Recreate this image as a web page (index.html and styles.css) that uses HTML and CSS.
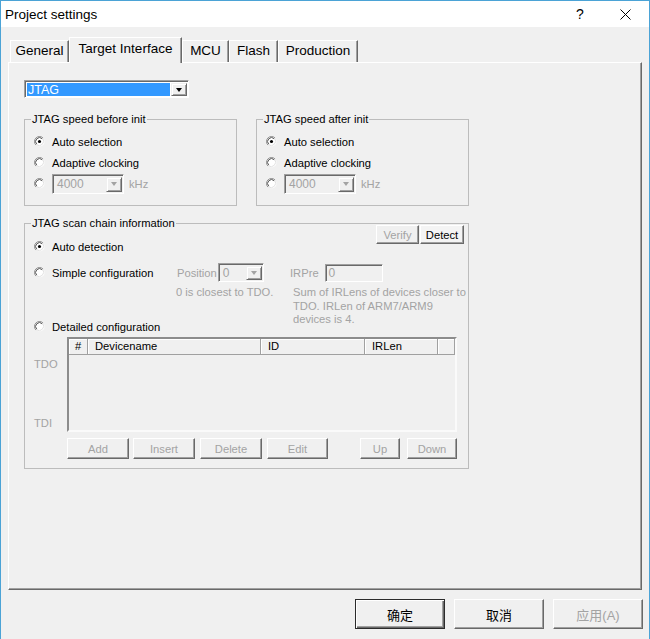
FILE: index.html
```html
<!DOCTYPE html>
<html>
<head>
<meta charset="utf-8">
<title>Project settings</title>
<link rel="stylesheet" href="styles.css">
</head>
<body>
<div class="window">
  <div class="titlebar">
    <span class="title">Project settings</span>
    <span class="help">?</span>
    <svg class="close" viewBox="0 0 11 11"><path d="M0.5 0.5L10.5 10.5M10.5 0.5L0.5 10.5" stroke="#000" stroke-width="1" fill="none"/></svg>
  </div>
  <div class="client">
    <div class="tabs">
      <div class="tab t-general">General</div>
      <div class="tab active t-target">Target Interface</div>
      <div class="tab t-mcu">MCU</div>
      <div class="tab t-flash">Flash</div>
      <div class="tab t-prod">Production</div>
    </div>
    <div class="panel">
      <div class="combo main-combo">
        <span class="combo-value">JTAG</span>
        <span class="combo-btn"><i class="tri"></i></span>
      </div>

      <div class="speed-row">
        <fieldset class="group speed">
          <legend>JTAG speed before init</legend>
          <div class="group-body">
            <div class="opt"><svg class="radio" viewBox="0 0 12 12"><circle cx="6" cy="6" r="5.5" fill="#fff"/><path d="M2.1 9.9A5.5 5.5 0 0 1 9.9 2.1" fill="none" stroke="#8a8a8a"/><path d="M3 9A4.2 4.2 0 0 1 9 3" fill="none" stroke="#404040"/><path d="M9.5 2.5A5 5 0 0 1 2.5 9.5" fill="none" stroke="#dedede"/><circle cx="6" cy="6" r="1.7" fill="#000"/></svg><span>Auto selection</span></div>
            <div class="opt"><svg class="radio" viewBox="0 0 12 12"><circle cx="6" cy="6" r="5.5" fill="#fff"/><path d="M2.1 9.9A5.5 5.5 0 0 1 9.9 2.1" fill="none" stroke="#8a8a8a"/><path d="M3 9A4.2 4.2 0 0 1 9 3" fill="none" stroke="#404040"/><path d="M9.5 2.5A5 5 0 0 1 2.5 9.5" fill="none" stroke="#dedede"/></svg><span>Adaptive clocking</span></div>
            <div class="opt"><svg class="radio" viewBox="0 0 12 12"><circle cx="6" cy="6" r="5.5" fill="#fff"/><path d="M2.1 9.9A5.5 5.5 0 0 1 9.9 2.1" fill="none" stroke="#8a8a8a"/><path d="M3 9A4.2 4.2 0 0 1 9 3" fill="none" stroke="#404040"/><path d="M9.5 2.5A5 5 0 0 1 2.5 9.5" fill="none" stroke="#dedede"/></svg>
              <div class="combo dis small-combo"><span class="combo-value">4000</span><span class="combo-btn"><i class="tri"></i></span></div>
              <span class="unit">kHz</span>
            </div>
          </div>
        </fieldset>
        <fieldset class="group speed">
          <legend>JTAG speed after init</legend>
          <div class="group-body">
            <div class="opt"><svg class="radio" viewBox="0 0 12 12"><circle cx="6" cy="6" r="5.5" fill="#fff"/><path d="M2.1 9.9A5.5 5.5 0 0 1 9.9 2.1" fill="none" stroke="#8a8a8a"/><path d="M3 9A4.2 4.2 0 0 1 9 3" fill="none" stroke="#404040"/><path d="M9.5 2.5A5 5 0 0 1 2.5 9.5" fill="none" stroke="#dedede"/><circle cx="6" cy="6" r="1.7" fill="#000"/></svg><span>Auto selection</span></div>
            <div class="opt"><svg class="radio" viewBox="0 0 12 12"><circle cx="6" cy="6" r="5.5" fill="#fff"/><path d="M2.1 9.9A5.5 5.5 0 0 1 9.9 2.1" fill="none" stroke="#8a8a8a"/><path d="M3 9A4.2 4.2 0 0 1 9 3" fill="none" stroke="#404040"/><path d="M9.5 2.5A5 5 0 0 1 2.5 9.5" fill="none" stroke="#dedede"/></svg><span>Adaptive clocking</span></div>
            <div class="opt"><svg class="radio" viewBox="0 0 12 12"><circle cx="6" cy="6" r="5.5" fill="#fff"/><path d="M2.1 9.9A5.5 5.5 0 0 1 9.9 2.1" fill="none" stroke="#8a8a8a"/><path d="M3 9A4.2 4.2 0 0 1 9 3" fill="none" stroke="#404040"/><path d="M9.5 2.5A5 5 0 0 1 2.5 9.5" fill="none" stroke="#dedede"/></svg>
              <div class="combo dis small-combo"><span class="combo-value">4000</span><span class="combo-btn"><i class="tri"></i></span></div>
              <span class="unit">kHz</span>
            </div>
          </div>
        </fieldset>
      </div>

      <fieldset class="group scan">
        <legend>JTAG scan chain information</legend>
        <div class="scan-body">
          <div class="row1">
            <div class="opt"><svg class="radio" viewBox="0 0 12 12"><circle cx="6" cy="6" r="5.5" fill="#fff"/><path d="M2.1 9.9A5.5 5.5 0 0 1 9.9 2.1" fill="none" stroke="#8a8a8a"/><path d="M3 9A4.2 4.2 0 0 1 9 3" fill="none" stroke="#404040"/><path d="M9.5 2.5A5 5 0 0 1 2.5 9.5" fill="none" stroke="#dedede"/><circle cx="6" cy="6" r="1.7" fill="#000"/></svg><span>Auto detection</span></div>
            <div class="btn-pair">
              <div class="btn dis btn-verify">Verify</div>
              <div class="btn btn-detect">Detect</div>
            </div>
          </div>

          <div class="simple">
            <div class="opt"><svg class="radio" viewBox="0 0 12 12"><circle cx="6" cy="6" r="5.5" fill="#fff"/><path d="M2.1 9.9A5.5 5.5 0 0 1 9.9 2.1" fill="none" stroke="#8a8a8a"/><path d="M3 9A4.2 4.2 0 0 1 9 3" fill="none" stroke="#404040"/><path d="M9.5 2.5A5 5 0 0 1 2.5 9.5" fill="none" stroke="#dedede"/></svg><span>Simple configuration</span></div>
            <div class="cell-pos dis"><span>Position</span>
              <div class="combo dis pos-combo"><span class="combo-value">0</span><span class="combo-btn"><i class="tri"></i></span></div>
            </div>
            <div class="cell-ir dis"><span>IRPre</span><div class="textbox ir-box">0</div></div>

            <div class="detailed">
              <div class="opt"><svg class="radio" viewBox="0 0 12 12"><circle cx="6" cy="6" r="5.5" fill="#fff"/><path d="M2.1 9.9A5.5 5.5 0 0 1 9.9 2.1" fill="none" stroke="#8a8a8a"/><path d="M3 9A4.2 4.2 0 0 1 9 3" fill="none" stroke="#404040"/><path d="M9.5 2.5A5 5 0 0 1 2.5 9.5" fill="none" stroke="#dedede"/></svg><span>Detailed configuration</span></div>
            </div>
            <div class="note">0 is closest to TDO.</div>
            <div class="note note-ir">Sum of IRLens of devices closer to<br>TDO. IRLen of ARM7/ARM9<br>devices is 4.</div>
          </div>

          <div class="list-row">
            <div class="tdo-col"><span>TDO</span><span>TDI</span></div>
            <div class="list">
              <div class="list-head">
                <div class="hcell h-num">#</div>
                <div class="hcell h-dev">Devicename</div>
                <div class="hcell h-id">ID</div>
                <div class="hcell h-ir">IRLen</div>
                <div class="hcell h-rest"></div>
              </div>
            </div>
          </div>

          <div class="list-btns">
            <div class="btn dis b-add">Add</div>
            <div class="btn dis b-insert">Insert</div>
            <div class="btn dis b-delete">Delete</div>
            <div class="btn dis b-edit">Edit</div>
            <div class="btn dis b-up">Up</div>
            <div class="btn dis b-down">Down</div>
          </div>
        </div>
      </fieldset>
    </div>

    <div class="footer">
      <div class="btn fbtn default">确定</div>
      <div class="btn fbtn">取消</div>
      <div class="btn fbtn dis">应用(A)</div>
    </div>
  </div>
</div>
</body>
</html>
```

FILE: styles.css
```css
* { box-sizing: border-box; }
html, body { margin: 0; padding: 0; }
body {
  width: 650px;
  height: 639px;
  overflow: hidden;
  background: #f0f0f0;
  color: #000;
  font-family: "Liberation Sans", Arial, sans-serif;
  font-size: 11.2px;
}

.window {
  width: 650px;
  height: 639px;
  border: 1px solid #4ba3d6;
  border-bottom: none;
  background: #f0f0f0;
  display: flex;
  flex-direction: column;
}

.titlebar {
  flex: none;
  height: 26px;
  background: #fff;
  display: flex;
  align-items: center;
}
.title { font-size: 13.5px; padding-left: 4px; }
.help { margin-left: auto; width: 8px; text-align: center; font-size: 14px; }
.close { display: block; width: 11px; height: 11px; margin-left: 36px; margin-right: 18px; }

.client {
  flex: 1;
  padding: 10px 0 0 7px;
  display: flex;
  flex-direction: column;
}

.tabs {
  display: flex;
  align-items: flex-end;
  height: 25px;
  padding-left: 2px;
}
.tab {
  height: 22px;
  line-height: 20px;
  text-align: center;
  font-size: 13.5px;
  white-space: nowrap;
  background: #f0f0f0;
  border-top: 1px solid #fff;
  border-left: 1px solid #fff;
  border-right: 1px solid #696969;
  box-shadow: inset -1px 0 #a0a0a0;
}
.tab.active {
  height: 26px;
  line-height: 21px;
  margin-bottom: -1px;
  position: relative;
  z-index: 1;
}
.t-general { width: 59px; }
.t-target { width: 113px; }
.t-mcu { width: 47px; }
.t-flash { width: 49px; }
.t-prod { width: 80px; }

.panel {
  width: 634px;
  height: 528px;
  border: 1px solid;
  border-color: #fff #696969 #696969 #fff;
  box-shadow: inset -1px -1px #a0a0a0;
  padding: 17px 0 0 15px;
}

/* combo boxes */
.combo {
  display: flex;
  border: 1px solid;
  border-color: #a0a0a0 #fff #fff #a0a0a0;
  box-shadow: inset 1px 1px #696969;
  padding: 2px 1px 1px 2px;
  background: #f0f0f0;
}
.combo-value {
  flex: 1;
  display: flex;
  align-items: center;
  padding-left: 2px;
  white-space: nowrap;
}
.combo-btn {
  width: 16px;
  flex: none;
  display: flex;
  align-items: center;
  justify-content: center;
  background: #f0f0f0;
  border: 1px solid;
  border-color: #f0f0f0 #696969 #696969 #f0f0f0;
  box-shadow: inset 1px 1px #fff, inset -1px -1px #a0a0a0;
}
.tri {
  width: 0;
  height: 0;
  border-left: 3.5px solid transparent;
  border-right: 3.5px solid transparent;
  border-top: 4px solid #000;
}
.dis { color: #a3a3a3; }
.dis .tri { border-top-color: #a3a3a3; }

.main-combo {
  width: 165px;
  height: 18px;
  background: #fff;
}
.main-combo .combo-value {
  background: #3399ff;
  color: #fff;
  margin-right: 1px;
  padding-left: 1px;
  font-size: 12.5px;
}

.small-combo { width: 72px; height: 20px; }
.small-combo .combo-value { font-size: 12px; }

/* group boxes */
.speed-row {
  display: flex;
  gap: 19px;
  margin-top: 15px;
}
.group {
  margin: 0;
  padding: 0;
  min-width: 0;
  border: 1px solid #bcbcbc;
}
.group legend {
  padding: 0 1px;
  margin-left: 6px;
  line-height: 13px;
  font-size: 11.2px;
}
.speed { width: 213px; }
.group-body { padding: 5px 0 11px 9px; }

.opt {
  display: flex;
  align-items: center;
  height: 21px;
  white-space: nowrap;
}
.radio {
  width: 11px;
  height: 11px;
  flex: none;
  margin-right: 7px;
}
.unit { margin-left: 5px; color: #a3a3a3; }

/* scan chain */
.scan { width: 445px; margin-top: 11px; }
.scan-body { padding: 0 4px 9px 9px; }

.row1 {
  display: flex;
  justify-content: space-between;
  height: 32px;
  margin-top: -5px;
}
.row1 .opt { align-self: flex-end; }
.btn-pair { display: flex; gap: 1px; align-self: flex-start; }

.btn {
  display: flex;
  align-items: center;
  justify-content: center;
  white-space: nowrap;
  background: #f0f0f0;
  border: 1px solid;
  border-color: #fff #696969 #696969 #fff;
  box-shadow: inset -1px -1px #a0a0a0;
}
.btn-verify { width: 43px; height: 19px; }
.btn-detect { width: 44px; height: 19px; background: #f4f4f4; }

.simple {
  display: grid;
  grid-template-columns: 142px 114px 1fr;
  grid-template-rows: 21px 51px;
  row-gap: 3px;
  margin-top: 5px;
}
.cell-pos { display: flex; align-items: center; padding-left: 1px; }
.pos-combo { width: 46px; height: 19px; margin-left: 1px; }
.pos-combo .combo-value { font-size: 12px; }
.cell-ir { display: flex; align-items: center; }
.textbox {
  display: flex;
  align-items: center;
  padding-left: 3px;
  font-size: 12px;
  border: 1px solid;
  border-color: #a0a0a0 #fff #fff #a0a0a0;
  box-shadow: inset 1px 1px #696969;
  background: #f0f0f0;
}
.ir-box { width: 58px; height: 18px; margin-left: 6px; }
.detailed { display: flex; align-items: flex-end; }
.note {
  line-height: 13.5px;
  white-space: nowrap;
  color: #a3a3a3;
}
.note-ir { padding-left: 3px; }

.list-row { display: flex; }
.tdo-col {
  width: 33px;
  height: 95px;
  display: flex;
  flex-direction: column;
  justify-content: space-between;
  padding: 21px 0 2px 0;
  line-height: 13.5px;
  color: #a3a3a3;
}
.list {
  width: 390px;
  height: 95px;
  border: 2px solid;
  border-color: #8c8c8c #fafafa #fafafa #8c8c8c;
  background: #f0f0f0;
}
.list-head { display: flex; height: 16px; }
.hcell {
  height: 16px;
  line-height: 15px;
  padding-left: 7px;
  white-space: nowrap;
  border-right: 1px solid #a0a0a0;
  border-bottom: 1px solid #a0a0a0;
  box-shadow: inset 1px 1px #fff;
}
.h-num { width: 19px; padding-left: 0; text-align: center; }
.h-dev { width: 173px; }
.h-id { width: 104px; }
.h-ir { width: 73px; }
.h-rest { flex: 1; }

.list-btns {
  display: flex;
  height: 21px;
  margin: 6px 0 0 33px;
}
.list-btns .btn { height: 21px; }
.b-add { width: 62px; }
.b-insert { width: 62px; margin-left: 4px; }
.b-delete { width: 62px; margin-left: 5px; }
.b-edit { width: 61px; margin-left: 5px; }
.b-up { width: 40px; margin-left: 32px; }
.b-down { width: 50px; margin-left: 7px; }

/* footer */
.footer {
  display: flex;
  justify-content: flex-end;
  gap: 9px;
  margin-top: 9px;
  padding-right: 6px;
}
.fbtn {
  width: 90px;
  height: 30px;
  font-family: "Liberation Sans", "Noto Sans CJK SC", sans-serif;
  font-size: 13px;
}
.fbtn.default {
  border: 1px solid #2b2b2b;
  box-shadow: inset 1px 1px #fff, inset -1px -1px #696969, inset -2px -2px #a0a0a0;
}
```
